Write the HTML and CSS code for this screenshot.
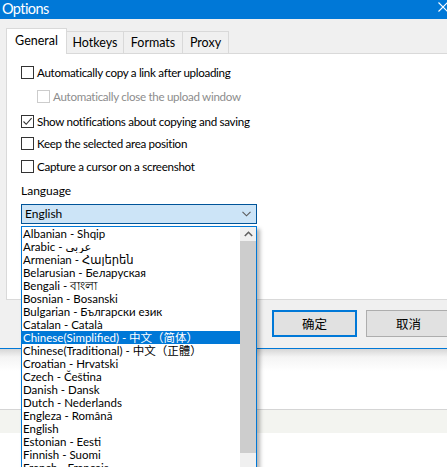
FILE: index.html
```html
<!DOCTYPE html>
<html>
<head>
<meta charset="utf-8">
<link rel="stylesheet" href="styles.css">
</head>
<body>
<div class="screen">
  <div class="dialog">
    <div class="titlebar">
      <span class="title">Options</span>
      <svg class="close" width="10" height="10" viewBox="0 0 10 10"><path d="M0.5 0.5 L9.5 9.5 M9.5 0.5 L0.5 9.5" stroke="#fff" stroke-width="1.1" fill="none"/></svg>
    </div>
    <div class="client">
      <div class="tabs">
        <div class="tab active tab-general">General</div>
        <div class="tab tab-hotkeys">Hotkeys</div>
        <div class="tab tab-formats">Formats</div>
        <div class="tab tab-proxy">Proxy</div>
      </div>
      <div class="panel">
        <div class="check row1"><span class="box"></span><span>Automatically copy a link after uploading</span></div>
        <div class="check row2 disabled"><span class="box"></span><span>Automatically close the upload window</span></div>
        <div class="check row3"><span class="box checked"><svg width="11" height="11" viewBox="0 0 11 11"><path d="M1.5 5.5 L4.2 8.3 L9.6 2.2" stroke="#333" stroke-width="1.1" fill="none"/></svg></span><span>Show notifications about copying and saving</span></div>
        <div class="check row4"><span class="box"></span><span>Keep the selected area position</span></div>
        <div class="check row5"><span class="box"></span><span>Capture a cursor on a screenshot</span></div>
        <div class="lang-label">Language</div>
        <div class="combo"><span>English</span><svg width="9" height="6" viewBox="0 0 9 6"><path d="M0.5 0.8 L4.5 4.8 L8.5 0.8" stroke="#5a5a5a" stroke-width="1.1" fill="none"/></svg></div>
      </div>
      <div class="buttons">
        <div class="btn default">确定</div>
        <div class="btn">取消</div>
      </div>
    </div>
  </div>
  <div class="below">
    <div class="band"></div>
  </div>
  <div class="droplist">
    <div class="items">
      <div class="item">Albanian - Shqip</div>
      <div class="item">Arabic - عربى</div>
      <div class="item">Armenian - Հայերեն</div>
      <div class="item">Belarusian - Беларуская</div>
      <div class="item">Bengali - বাংলা</div>
      <div class="item">Bosnian - Bosanski</div>
      <div class="item">Bulgarian - Български език</div>
      <div class="item">Catalan - Català</div>
      <div class="item selected">Chinese(Simplified) - 中文（简体）</div>
      <div class="item">Chinese(Traditional) - 中文（正體）</div>
      <div class="item">Croatian - Hrvatski</div>
      <div class="item">Czech - Čeština</div>
      <div class="item">Danish - Dansk</div>
      <div class="item">Dutch - Nederlands</div>
      <div class="item">Engleza - Română</div>
      <div class="item">English</div>
      <div class="item">Estonian - Eesti</div>
      <div class="item">Finnish - Suomi</div>
      <div class="item">French - Français</div>
      <div class="item">Galician - Galego</div>
    </div>
    <div class="scrollbar">
      <div class="arrow"><svg width="9" height="6" viewBox="0 0 9 6"><path d="M0.8 5 L4.5 1.3 L8.2 5" stroke="#606060" stroke-width="1.6" fill="none"/></svg></div>
      <div class="thumb"></div>
      <div class="track"></div>
    </div>
  </div>
</div>
</body>
</html>
```

FILE: styles.css
```css
html, body {
  margin: 0;
  padding: 0;
  background: #ffffff;
}
body {
  width: 447px;
  height: 467px;
  overflow: hidden;
  font-family: Lato, "DejaVu Sans", "Noto Sans CJK SC", sans-serif;
  font-size: 12px;
  color: #000;
}
.screen {
  position: relative;
  width: 447px;
  height: 467px;
  overflow: hidden;
}
.dialog {
  width: 480px;
  height: 348px;
  background: #f0f0f0;
  border-bottom: 1px solid #0078d7;
  display: flex;
  flex-direction: column;
}
.titlebar {
  height: 19px;
  background: #0078d7;
  display: flex;
  align-items: center;
  position: relative;
}
.title {
  color: #fff;
  font-size: 14.5px;
  letter-spacing: -0.6px;
  padding-left: 2px;
  line-height: 19px;
  margin-top: -3px;
}
.close {
  position: absolute;
  left: 438px;
  top: 2px;
}
.client {
  padding-left: 6px;
  display: flex;
  flex-direction: column;
  flex: 1;
}
.tabs {
  margin-top: 9px;
  height: 25px;
  display: flex;
  align-items: flex-end;
}
.tab {
  border: 1px solid #d9d9d9;
  border-left: none;
  border-bottom: none;
  background: #f0f0f0;
  display: flex;
  align-items: center;
  justify-content: center;
  font-size: 12.5px;
  box-sizing: border-box;
  height: 22px;
}
.tab.active {
  height: 26px;
  margin-bottom: -1px;
  background: #fff;
  border-left: 1px solid #d9d9d9;
  position: relative;
  z-index: 1;
  padding-bottom: 2px;
}
.tab-general { width: 61px; }
.tab-hotkeys { width: 57px; }
.tab-formats { width: 59px; }
.tab-proxy { width: 46px; }
.panel {
  height: 247px;
  box-sizing: border-box;
  background: #fff;
  border: 1px solid #d9d9d9;
  border-right: none;
  padding-left: 14px;
  display: flex;
  flex-direction: column;
}
.check {
  display: flex;
  align-items: center;
  height: 13px;
  line-height: 13px;
  white-space: nowrap;
  font-size: 11.6px;
  letter-spacing: -0.3px;
}
.check .box {
  width: 13px;
  height: 13px;
  box-sizing: border-box;
  border: 1px solid #333;
  background: #fff;
  margin-right: 3px;
  display: flex;
  align-items: center;
  justify-content: center;
}
.check.disabled {
  color: #8d8d8d;
  padding-left: 16px;
}
.check.disabled .box {
  border-color: #cccccc;
}
.row1 { margin-top: 12px; }
.row2 { margin-top: 11px; }
.row3 { margin-top: 12px; }
.row4 { margin-top: 9px; }
.row5 { margin-top: 10px; }
.lang-label {
  margin-top: 11px;
  line-height: 14px;
  height: 14px;
}
.combo {
  margin-top: 6px;
  width: 236px;
  height: 20px;
  box-sizing: border-box;
  background: #cce4f7;
  border: 1px solid #005499;
  display: flex;
  align-items: center;
  justify-content: space-between;
  padding: 0 5px 0 3px;
  line-height: 16px;
}
.buttons {
  display: flex;
  gap: 9px;
  padding-left: 266px;
  padding-top: 10px;
}
.btn {
  width: 85px;
  height: 27px;
  box-sizing: border-box;
  background: #e1e1e1;
  border: 1px solid #adadad;
  display: flex;
  align-items: center;
  justify-content: center;
  font-family: "Noto Sans CJK SC", sans-serif;
  font-size: 12.5px;
}
.btn.default {
  border: 2px solid #0078d7;
}
.below {
  height: 118px;
  background: linear-gradient(#d6d6d6 0px, #f4f4f4 8px, #ffffff 22px);
  display: flex;
  flex-direction: column;
}
.band {
  margin-top: 60px;
  height: 23px;
  background: #f3f4f0;
  border-top: 1px solid #d5d5d5;
}
.droplist {
  position: absolute;
  left: 21px;
  top: 226px;
  width: 236px;
  height: 262px;
  box-sizing: border-box;
  border: 1px solid #0078d7;
  background: #fff;
  display: flex;
  box-shadow: 3px 3px 4px rgba(0, 0, 0, 0.3);
}
.items {
  flex: 1;
  display: flex;
  flex-direction: column;
}
.item {
  height: 13px;
  line-height: 13px;
  padding-left: 1px;
  font-size: 11.5px;
  white-space: nowrap;
  overflow: hidden;
}
.item.selected {
  background: #0078d7;
  color: #fff;
}
.scrollbar {
  width: 16px;
  display: flex;
  flex-direction: column;
  background: #f0f0f0;
}
.arrow {
  height: 14px;
  display: flex;
  align-items: center;
  justify-content: center;
}
.thumb {
  height: 212px;
  background: #cdcdcd;
}
.track {
  flex: 1;
}
```
